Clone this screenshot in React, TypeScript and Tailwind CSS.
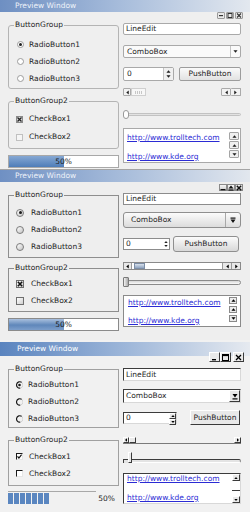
import type { ReactNode } from "react"

type Dir = "u" | "d" | "l" | "r"

const Tri = ({ d, s = 5, c = "#1e1e1e" }: { d: Dir; s?: number; c?: string }) => {
    const pts = {
        u: "0.5,4.5 3,1.5 5.5,4.5",
        d: "0.5,1.5 3,4.5 5.5,1.5",
        l: "4.5,0.5 1.5,3 4.5,5.5",
        r: "1.5,0.5 4.5,3 1.5,5.5",
    }[d]
    return (
        <svg width={s} height={s} viewBox="0 0 6 6">
            <polygon points={pts} fill={c} />
        </svg>
    )
}

const Group = ({ title, bg, className, children }: { title: string; bg: string; className: string; children: ReactNode }) => (
    <div className={`relative ${className}`}>
        <span className={`absolute left-[5px] top-[-6px] px-[1px] leading-[10px] ${bg}`}>{title}</span>
        {children}
    </div>
)

const Link = ({ children }: { children: ReactNode }) => (
    <a className="text-[#2b2bd4] underline leading-[10px]">{children}</a>
)

// ---------- window glyphs ----------
const GlyphA = ({ k }: { k: string }) => (
    <svg width="6" height="5" viewBox="0 0 6 5">
        {k === "min" && <rect x="1" y="2" width="4" height="1.2" fill="#333" />}
        {k === "max" && <rect x="1" y="0.5" width="4" height="4" fill="none" stroke="#333" strokeWidth="1" />}
        {k === "close" && <path d="M1 0.5 L5 4.5 M5 0.5 L1 4.5" stroke="#333" strokeWidth="1.1" />}
    </svg>
)

const GlyphB = ({ k }: { k: string }) => (
    <svg width="6" height="6" viewBox="0 0 6 6">
        {k === "min" && <rect x="0.5" y="4" width="5" height="1.3" fill="#111" />}
        {k === "max" && (
            <>
                <polygon points="0.5,3.6 3,0.6 5.5,3.6" fill="#111" />
                <rect x="0.5" y="4.4" width="5" height="1.2" fill="#111" />
            </>
        )}
        {k === "close" && <path d="M0.8 0.8 L5.2 5.2 M5.2 0.8 L0.8 5.2" stroke="#111" strokeWidth="1.5" />}
    </svg>
)

const GlyphC = ({ k }: { k: string }) => (
    <svg width="7" height="7" viewBox="0 0 7 7">
        {k === "min" && <rect x="1" y="5" width="4" height="1.4" fill="#000" />}
        {k === "max" && (
            <>
                <rect x="0.5" y="0.5" width="6" height="6" fill="none" stroke="#000" strokeWidth="1" />
                <rect x="0.5" y="0.5" width="6" height="1.6" fill="#000" />
            </>
        )}
        {k === "close" && <path d="M1 1 L6 6 M6 1 L1 6" stroke="#000" strokeWidth="1.3" />}
    </svg>
)

// ---------- radios and checks ----------
const RadioA = ({ on }: { on: boolean }) => (
    <span className="w-[7px] h-[7px] rounded-full border border-[#9c9c9c] bg-white flex items-center justify-center">
        {on && <span className="w-[3px] h-[3px] rounded-full bg-[#222]" />}
    </span>
)

const CheckA = ({ on }: { on: boolean }) => (
    <span className={`w-[7px] h-[7px] border flex items-center justify-center ${on ? "border-[#8a8a8a] bg-[#d9d9d9]" : "border-[#c0c0c0] bg-[#f5f5f5]"}`}>
        {on && (
            <svg width="5" height="5" viewBox="0 0 5 5">
                <path d="M0.5 0.5 L4.5 4.5 M4.5 0.5 L0.5 4.5" stroke="#222" strokeWidth="1.3" />
            </svg>
        )}
    </span>
)

const RadioB = ({ on }: { on: boolean }) => (
    <span className="w-[8px] h-[8px] rounded-full border border-[#7c7c7c] bg-[linear-gradient(135deg,#ffffff,#c4c4c4)] flex items-center justify-center">
        {on && <span className="w-[3px] h-[3px] rounded-full bg-[#1a1a1a]" />}
    </span>
)

const CheckB = ({ on }: { on: boolean }) => (
    <span className="w-[8px] h-[8px] border border-[#6e6e6e] bg-[linear-gradient(135deg,#ffffff,#cfcfcf)] flex items-center justify-center">
        {on && (
            <svg width="6" height="6" viewBox="0 0 6 6">
                <path d="M0.8 0.8 L5.2 5.2 M5.2 0.8 L0.8 5.2" stroke="#111" strokeWidth="1.6" />
            </svg>
        )}
    </span>
)

const RadioC = ({ on }: { on: boolean }) => (
    <svg width="7" height="8" viewBox="0 0 7 8">
        <path d="M5.8 1.5 A3.2 3.2 0 1 0 4.3 7.1" fill="none" stroke="#1a1a1a" strokeWidth="1.2" />
        <path d="M4.3 7.1 A3.2 3.2 0 0 0 5.8 1.5" fill="none" stroke="#d0d0d0" strokeWidth="1" />
        {on && <circle cx="3.5" cy="4" r="1.3" fill="#1a1a1a" />}
    </svg>
)

const CheckC = ({ on }: { on: boolean }) => (
    <span className="w-[7px] h-[7px] border border-t-[#1a1a1a] border-l-[#1a1a1a] border-r-[#e6e6e6] border-b-[#e6e6e6] bg-white flex items-center justify-center">
        {on && (
            <svg width="5" height="5" viewBox="0 0 5 5">
                <path d="M0.5 2.4 L1.9 4 L4.6 0.6" fill="none" stroke="#111" strokeWidth="1.2" />
            </svg>
        )}
    </span>
)

const raisedC = "border border-t-white border-l-white border-r-[#3a3a3a] border-b-[#3a3a3a] bg-[#e9e9e9]"
const sunkenC = "border border-t-[#3c3c3c] border-l-[#3c3c3c] border-r-[#d8d8d8] border-b-[#d8d8d8] bg-white"

// ---------- panel 1 ----------
const PanelA = () => (
    <section className="h-[170px] bg-[#efefef] border-b border-[#a4a4a4] flex flex-col">
        <div className="h-[20px] flex justify-between bg-[linear-gradient(90deg,#6e8fc2,#a9bedc_50%,#e3e8ef)] bg-[length:100%_12px] bg-no-repeat">
            <span className="pl-[15px] leading-[12px] text-[#eef2f9]">Preview Window</span>
            <div className="self-end mb-[1px] mr-[7px] flex gap-[1px]">
                {["min", "max", "close"].map((k) => (
                    <span key={k} className="w-[8px] h-[7px] border border-[#9a9a9a] rounded-[1px] bg-[#e9e9e9] flex items-center justify-center">
                        <GlyphA k={k} />
                    </span>
                ))}
            </div>
        </div>
        <div className="flex px-[8px] gap-[4px]">
            <div className="w-[111px] flex flex-col pt-[5px]">
                <Group title="ButtonGroup" bg="bg-[#efefef]" className="h-[64px] border border-[#b4b4b4] rounded-[3px] pt-[10px] pl-[8px]">
                    {[1, 2, 3].map((i) => (
                        <div key={i} className="h-[17px] flex items-center gap-[5px]">
                            <RadioA on={i === 1} />
                            <span>RadioButton{i}</span>
                        </div>
                    ))}
                </Group>
                <Group title="ButtonGroup2" bg="bg-[#efefef]" className="mt-[12px] h-[48px] border border-[#b4b4b4] rounded-[3px] pt-[8px] pl-[7px]">
                    {[1, 2].map((i) => (
                        <div key={i} className="h-[18px] flex items-center gap-[6px]">
                            <CheckA on={i === 1} />
                            <span>CheckBox{i}</span>
                        </div>
                    ))}
                </Group>
                <div className="mt-[6px] h-[13px] border border-[#a8a8a8] bg-white relative flex">
                    <div className="w-[55px] bg-[linear-gradient(#86a8d4,#4f7db8)]" />
                    <span className="absolute inset-0 flex items-center justify-center leading-[11px]">50%</span>
                </div>
            </div>
            <div className="w-[118px] flex flex-col pt-[3px]">
                <div className="h-[12px] border border-[#a9a9a9] rounded-[2px] bg-white pl-[2px] flex items-center">LineEdit</div>
                <div className="mt-[10px] h-[13px] border border-[#a9a9a9] rounded-[2px] bg-[#fafafa] flex">
                    <span className="flex-1 pl-[3px] flex items-center">ComboBox</span>
                    <span className="w-[10px] border-l border-[#c4c4c4] flex items-center justify-center">
                        <Tri d="d" s={5} />
                    </span>
                </div>
                <div className="mt-[9px] h-[14px] flex gap-[5px]">
                    <div className="w-[51px] border border-[#a9a9a9] rounded-[2px] bg-white flex">
                        <span className="flex-1 pl-[3px] flex items-center">0</span>
                        <span className="w-[10px] border-l border-[#c4c4c4] bg-[#f0f0f0] flex flex-col items-center justify-center">
                            <Tri d="u" s={5} />
                            <Tri d="d" s={5} />
                        </span>
                    </div>
                    <div className="flex-1 border border-[#9c9c9c] rounded-[2px] bg-[linear-gradient(#fafafa,#e2e2e2)] flex items-center justify-center">PushButton</div>
                </div>
                <div className="mt-[7px] h-[8px] flex">
                    <span className="w-[8px] border border-[#aaaaaa] rounded-[1px] bg-[#f2f2f2] flex items-center justify-center">
                        <Tri d="l" s={5} />
                    </span>
                    <span className="w-[15px] border border-[#cfcfcf] bg-[#f7f7f7] flex items-center justify-center gap-[1px]">
                        {[0, 1, 2, 3].map((i) => (
                            <span key={i} className="w-[1px] h-[3px] bg-[#c6c6c6]" />
                        ))}
                    </span>
                    <span className="flex-1" />
                    <span className="w-[10px] border border-[#aaaaaa] rounded-[1px] bg-[#f2f2f2] flex items-center justify-center">
                        <Tri d="l" s={5} />
                    </span>
                    <span className="w-[10px] border border-l-0 border-[#aaaaaa] rounded-[1px] bg-[#f2f2f2] flex items-center justify-center">
                        <Tri d="r" s={5} />
                    </span>
                </div>
                <div className="mt-[13px] h-[10px] flex items-center">
                    <span className="w-[6px] h-[9px] rounded-[3px] border border-[#9a9a9a] bg-white shrink-0 z-10" />
                    <span className="flex-1 h-[3px] -ml-[3px] rounded-[2px] border border-[#c2c2c2] bg-[#e2e2e2]" />
                </div>
                <div className="mt-[9px] h-[35px] border border-[#a9a9a9] bg-white flex">
                    <div className="flex-1 pl-[3px] pt-[4px] flex flex-col gap-[9px] items-start">
                        <Link>http://www.trolltech.com</Link>
                        <Link>http://www.kde.org</Link>
                    </div>
                    <div className="w-[11px] pr-[1px] pt-[3px] flex flex-col gap-[1px]">
                        {(["u", "u", "d"] as Dir[]).map((d, i) => (
                            <span key={i} className="h-[8px] border border-[#a4a4a4] rounded-[1px] bg-[#f0f0f0] flex items-center justify-center">
                                <Tri d={d} s={5} />
                            </span>
                        ))}
                    </div>
                </div>
            </div>
        </div>
    </section>
)

// ---------- panel 2 ----------
const PanelB = () => (
    <section className="h-[170px] bg-[#eeeeee] flex flex-col">
        <div className="h-[23px] flex justify-between bg-[linear-gradient(90deg,#6f90c3,#a8bddb_50%,#e2e7ee)] bg-[length:100%_12px] bg-no-repeat">
            <span className="pl-[15px] leading-[12px] text-[#eef2f9]">Preview Window</span>
            <div className="self-end mb-[2px] mr-[7px] flex">
                {["min", "max", "close"].map((k) => (
                    <span key={k} className="w-[8px] h-[7px] border border-[#8a8a8a] bg-[linear-gradient(#f6f6f6,#cfcfcf)] flex items-center justify-center">
                        <GlyphB k={k} />
                    </span>
                ))}
            </div>
        </div>
        <div className="flex px-[8px] gap-[4px]">
            <div className="w-[111px] flex flex-col pt-[2px]">
                <Group title="ButtonGroup" bg="bg-[#eeeeee]" className="h-[63px] border border-[#8e8e8e] pt-[8px] pl-[7px]">
                    {[1, 2, 3].map((i) => (
                        <div key={i} className="h-[17px] flex items-center gap-[7px]">
                            <RadioB on={i === 1} />
                            <span>RadioButton{i}</span>
                        </div>
                    ))}
                </Group>
                <Group title="ButtonGroup2" bg="bg-[#eeeeee]" className="mt-[10px] h-[44px] border border-[#8e8e8e] pt-[6px] pl-[7px]">
                    {[1, 2].map((i) => (
                        <div key={i} className="h-[17px] flex items-center gap-[7px]">
                            <CheckB on={i === 1} />
                            <span>CheckBox{i}</span>
                        </div>
                    ))}
                </Group>
                <div className="mt-[6px] h-[13px] border border-[#8a8a8a] bg-white relative flex">
                    <div className="w-[55px] bg-[linear-gradient(#a9c0de,#5f87ba_55%,#7c9ecb)]" />
                    <span className="absolute inset-0 flex items-center justify-center leading-[11px]">50%</span>
                </div>
            </div>
            <div className="w-[118px] flex flex-col">
                <div className="h-[12px] border border-[#8c8c8c] bg-white pl-[2px] flex items-center">LineEdit</div>
                <div className="mt-[7px] h-[16px] border border-[#8f8f8f] rounded-[3px] bg-[linear-gradient(#fbfbfb,#dcdcdc)] flex">
                    <span className="flex-1 pl-[7px] flex items-center">ComboBox</span>
                    <span className="w-[15px] border-l border-[#a8a8a8] flex items-center justify-center">
                        <svg width="6" height="7" viewBox="0 0 6 7">
                            <rect x="0.5" y="0.5" width="5" height="1.2" fill="#111" />
                            <polygon points="0.5,2.6 3,6 5.5,2.6" fill="#111" />
                        </svg>
                    </span>
                </div>
                <div className="mt-[8px] h-[16px] flex items-center gap-[3px] pr-[2px]">
                    <div className="w-[47px] h-[12px] border border-[#8c8c8c] bg-white flex">
                        <span className="flex-1 pl-[2px] flex items-center">0</span>
                        <span className="w-[7px] flex flex-col items-center justify-center">
                            <Tri d="u" s={4} />
                            <Tri d="d" s={4} />
                        </span>
                    </div>
                    <div className="flex-1 h-[16px] border border-[#8f8f8f] rounded-[3px] bg-[linear-gradient(#fbfbfb,#d8d8d8)] flex items-center justify-center">PushButton</div>
                </div>
                <div className="mt-[10px] h-[8px] border border-[#8a8a8a] bg-white flex">
                    <span className="w-[8px] border-r border-[#9a9a9a] bg-[#e8e8e8] flex items-center justify-center">
                        <Tri d="l" s={5} c="#000" />
                    </span>
                    <span className="w-[11px] ml-[2px] border border-[#7d8ea6] bg-[linear-gradient(#d9e1ec,#8ea3c0)]" />
                    <span className="flex-1" />
                    <span className="w-[9px] border-l border-[#9a9a9a] bg-[#e8e8e8] flex items-center justify-center">
                        <Tri d="l" s={5} c="#000" />
                    </span>
                    <span className="w-[9px] border-l border-[#9a9a9a] bg-[#e8e8e8] flex items-center justify-center">
                        <Tri d="r" s={5} c="#000" />
                    </span>
                </div>
                <div className="mt-[7px] h-[10px] flex items-center">
                    <span className="w-[6px] h-[10px] border border-[#7a7a7a] rounded-[1px] bg-[linear-gradient(90deg,#f2f2f2,#a9a9a9)] shrink-0 z-10" />
                    <span className="flex-1 h-[5px] -ml-[2px] rounded-r-[3px] border border-[#8a8a8a] bg-[linear-gradient(#d6d6d6,#fafafa)]" />
                </div>
                <div className="mt-[8px] h-[32px] border border-[#8a8a8a] bg-white flex">
                    <div className="flex-1 pl-[4px] pt-[2px] flex flex-col gap-[8px] items-start">
                        <Link>http://www.trolltech.com</Link>
                        <Link>http://www.kde.org</Link>
                    </div>
                    <div className="w-[11px] pr-[3px] pt-[1px] flex flex-col gap-[2px]">
                        {(["u", "u", "d"] as Dir[]).map((d, i) => (
                            <span key={i} className="h-[7px] border border-[#8a8a8a] bg-[#ececec] flex items-center justify-center">
                                <Tri d={d} s={5} c="#000" />
                            </span>
                        ))}
                    </div>
                </div>
            </div>
        </div>
    </section>
)

// ---------- panel 3 ----------
const PanelC = () => (
    <section className="h-[172px] bg-[#f1f1f1] flex flex-col">
        <div className="h-[28px] flex justify-between bg-[linear-gradient(90deg,#5a84bf,#9db6d9_50%,#e6eaf0)] bg-[length:100%_14px] bg-[position:0_2px] bg-no-repeat">
            <span className="pl-[17px] pt-[2px] leading-[14px] text-white">Preview Window</span>
            <div className="self-end mb-[6px] mr-[6px] flex">
                <span className={`w-[11px] h-[10px] flex items-center justify-center ${raisedC}`}>
                    <GlyphC k="min" />
                </span>
                <span className={`w-[11px] h-[10px] flex items-center justify-center ${raisedC}`}>
                    <GlyphC k="max" />
                </span>
                <span className={`ml-[2px] w-[11px] h-[10px] flex items-center justify-center ${raisedC}`}>
                    <GlyphC k="close" />
                </span>
            </div>
        </div>
        <div className="flex px-[8px] gap-[4px]">
            <div className="w-[111px] flex flex-col pt-[1px]">
                <Group title="ButtonGroup" bg="bg-[#f1f1f1]" className="h-[59px] border border-[#a0a0a0] pt-[6px] pl-[7px]">
                    {[1, 2, 3].map((i) => (
                        <div key={i} className="h-[17px] flex items-center gap-[5px]">
                            <RadioC on={i === 1} />
                            <span>RadioButton{i}</span>
                        </div>
                    ))}
                </Group>
                <Group title="ButtonGroup2" bg="bg-[#f1f1f1]" className="mt-[12px] h-[46px] border border-[#a0a0a0] pt-[7px] pl-[7px]">
                    {[1, 2].map((i) => (
                        <div key={i} className="h-[17px] flex items-center gap-[6px]">
                            <CheckC on={i === 1} />
                            <span>CheckBox{i}</span>
                        </div>
                    ))}
                </Group>
                <div className="mt-[5px] h-[13px] flex items-end">
                    <div className="w-[88px] h-[13px] border-t border-[#a8a8a8] pt-[1px] flex gap-[1px]">
                        {[0, 1, 2, 3, 4, 5, 6].map((i) => (
                            <span key={i} className="w-[5px] h-[11px] bg-[#5a86c0]" />
                        ))}
                    </div>
                    <span className="ml-auto pr-[4px] leading-[11px]">50%</span>
                </div>
            </div>
            <div className="w-[118px] flex flex-col">
                <div className={`h-[13px] pl-[2px] flex items-center ${sunkenC}`}>LineEdit</div>
                <div className={`mt-[8px] h-[14px] flex ${sunkenC}`}>
                    <span className="flex-1 pl-[2px] flex items-center">ComboBox</span>
                    <span className={`w-[11px] flex items-center justify-center ${raisedC}`}>
                        <svg width="6" height="7" viewBox="0 0 6 7">
                            <polygon points="0.5,1 3,4.4 5.5,1" fill="#000" />
                            <rect x="0.5" y="5.3" width="5" height="1.2" fill="#000" />
                        </svg>
                    </span>
                </div>
                <div className="mt-[7px] h-[15px] flex items-center">
                    <div className={`w-[54px] h-[12px] flex ${sunkenC}`}>
                        <span className="flex-1 pl-[2px] flex items-center">0</span>
                        <span className="w-[7px] flex flex-col">
                            <span className={`flex-1 flex items-center justify-center ${raisedC}`}>
                                <Tri d="u" s={4} c="#000" />
                            </span>
                            <span className={`flex-1 flex items-center justify-center ${raisedC}`}>
                                <Tri d="d" s={4} c="#000" />
                            </span>
                        </span>
                    </div>
                    <div className={`ml-[13px] w-[50px] h-[15px] flex items-center justify-center ${raisedC}`}>PushButton</div>
                </div>
                <div className="mt-[12px] h-[7px] flex border-b border-[#7a7a7a]">
                    <span className={`w-[6px] flex items-center justify-center ${raisedC}`}>
                        <Tri d="l" s={4} c="#000" />
                    </span>
                    <span className={`w-[7px] ${raisedC}`} />
                    <span className="flex-1" />
                    <span className={`w-[7px] flex items-center justify-center ${raisedC}`}>
                        <Tri d="r" s={4} c="#000" />
                    </span>
                </div>
                <div className="mt-[7px] h-[12px] flex items-end">
                    <span className="w-[5px] h-[4px] border-t border-l border-[#3c3c3c] bg-[#e4e4e4]" />
                    <span className={`w-[4px] h-[11px] ${raisedC}`} />
                    <span className="flex-1 h-[4px] border-t border-r border-b border-t-[#3c3c3c] border-r-[#8a8a8a] border-b-white rounded-r-[3px] bg-[#e4e4e4]" />
                </div>
                <div className={`mt-[10px] h-[31px] flex ${sunkenC}`}>
                    <div className="flex-1 pl-[3px] flex flex-col gap-[9px] items-start">
                        <Link>http://www.trolltech.com</Link>
                        <Link>http://www.kde.org</Link>
                    </div>
                    <div className="w-[8px] flex flex-col">
                        <span className={`h-[7px] flex items-center justify-center ${raisedC}`}>
                            <Tri d="u" s={4} c="#000" />
                        </span>
                        <span className="flex-1 flex items-center">
                            <span className="w-full h-[4px] border-b border-[#3c3c3c]" />
                        </span>
                        <span className={`h-[7px] flex items-center justify-center ${raisedC}`}>
                            <Tri d="d" s={4} c="#000" />
                        </span>
                    </div>
                </div>
            </div>
        </div>
    </section>
)

export default function App() {
    return (
        <div className="w-[250px] h-[512px] overflow-hidden font-['DejaVu_Sans',sans-serif] text-[7.5px] leading-[10px] text-[#1e1e1e] flex flex-col">
            <PanelA />
            <PanelB />
            <PanelC />
        </div>
    )
}
